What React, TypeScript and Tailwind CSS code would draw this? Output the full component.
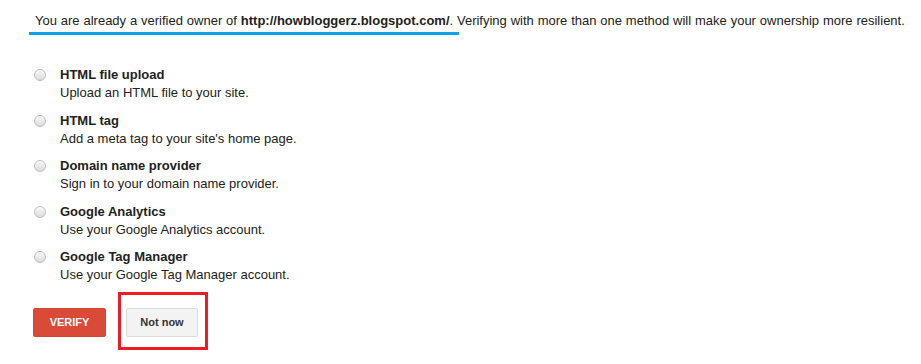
const methods = [
  { title: "HTML file upload", desc: "Upload an HTML file to your site." },
  { title: "HTML tag", desc: "Add a meta tag to your site's home page." },
  { title: "Domain name provider", desc: "Sign in to your domain name provider." },
  { title: "Google Analytics", desc: "Use your Google Analytics account." },
  { title: "Google Tag Manager", desc: "Use your Google Tag Manager account." },
]

export default function App() {
  return (
    <div className="w-[921px] h-[364px] bg-white overflow-hidden font-['Liberation_Sans',Arial,sans-serif] text-[13px] text-[#222]">
      <div className="pt-[12px] pl-[35px] h-[30px] leading-[18px] whitespace-nowrap [word-spacing:0.25px]">
        You are already a verified owner of <b>http://howbloggerz.blogspot.com/</b>. Verifying with more than one method will make your ownership more resilient.
      </div>
      <div className="ml-[29px] mt-[2px] w-[430px] h-[3px] bg-[#0ba3e6]" />

      <ul className="mt-[31px] flex flex-col gap-[10.5px]">
        {methods.map((m) => (
          <li key={m.title} className="flex pl-[34px]">
            <div className="mt-[3px] w-[12px] h-[12px] rounded-full border border-[#bdbdbd] bg-gradient-to-b from-[#f7f7f7] to-[#dcdcdc] shadow-[inset_0_1px_1px_rgba(255,255,255,0.8)]" />
            <div className="ml-[14px]">
              <div className="font-bold leading-[18px] h-[18px]">{m.title}</div>
              <div className="leading-[17px] h-[17px]">{m.desc}</div>
            </div>
          </li>
        ))}
      </ul>

      <div className="mt-[25px] pl-[33px] flex items-start gap-[20px]">
        <button className="w-[73px] h-[29px] rounded-[2px] border border-[#d14836] bg-[#d94a38] text-white text-[11px] font-bold uppercase">
          Verify
        </button>
        <div className="relative">
          <button className="w-[72px] h-[29px] rounded-[2px] border border-[#dcdcdc] bg-[#f3f3f3] text-[#333] text-[11px] font-bold">
            Not now
          </button>
          <div className="absolute left-[-8px] top-[-16px] w-[90px] h-[58px] border-[3px] border-[#ed1c24]" />
        </div>
      </div>
    </div>
  )
}
